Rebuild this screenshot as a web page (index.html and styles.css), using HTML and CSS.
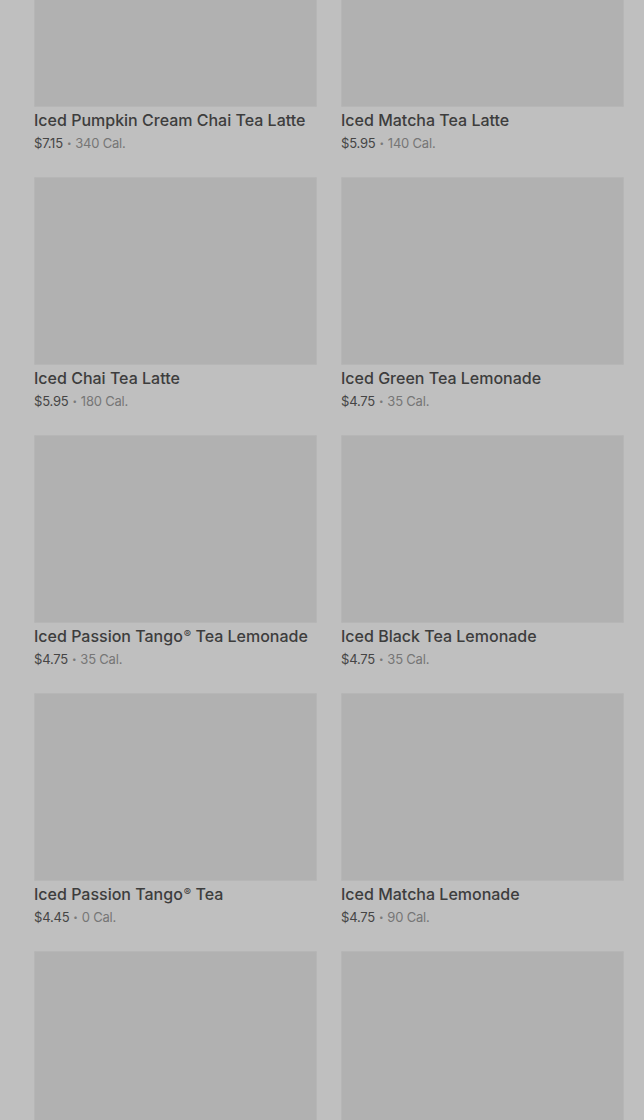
FILE: index.html
```html
<!DOCTYPE html>
<html lang="en">
<head>
<meta charset="utf-8">
<title>Iced Teas</title>
<link rel="stylesheet" href="styles.css">
</head>
<body>
<main class="grid">
  <article class="card"><div class="thumb"></div><h3 class="name">Iced Pumpkin Cream Chai Tea Latte</h3><p class="meta"><span class="price">$7.15</span><span class="dot">•</span><span class="cal">340 Cal.</span></p></article>
  <article class="card"><div class="thumb"></div><h3 class="name">Iced Matcha Tea Latte</h3><p class="meta"><span class="price">$5.95</span><span class="dot">•</span><span class="cal">140 Cal.</span></p></article>
  <article class="card"><div class="thumb"></div><h3 class="name">Iced Chai Tea Latte</h3><p class="meta"><span class="price">$5.95</span><span class="dot">•</span><span class="cal">180 Cal.</span></p></article>
  <article class="card"><div class="thumb"></div><h3 class="name">Iced Green Tea Lemonade</h3><p class="meta"><span class="price">$4.75</span><span class="dot">•</span><span class="cal">35 Cal.</span></p></article>
  <article class="card"><div class="thumb"></div><h3 class="name">Iced Passion Tango<span class="reg">®</span> Tea Lemonade</h3><p class="meta"><span class="price">$4.75</span><span class="dot">•</span><span class="cal">35 Cal.</span></p></article>
  <article class="card"><div class="thumb"></div><h3 class="name">Iced Black Tea Lemonade</h3><p class="meta"><span class="price">$4.75</span><span class="dot">•</span><span class="cal">35 Cal.</span></p></article>
  <article class="card"><div class="thumb"></div><h3 class="name">Iced Passion Tango<span class="reg">®</span> Tea</h3><p class="meta"><span class="price">$4.45</span><span class="dot">•</span><span class="cal">0 Cal.</span></p></article>
  <article class="card"><div class="thumb"></div><h3 class="name">Iced Matcha Lemonade</h3><p class="meta"><span class="price">$4.75</span><span class="dot">•</span><span class="cal">90 Cal.</span></p></article>
  <article class="card"><div class="thumb"></div></article>
  <article class="card"><div class="thumb"></div></article>
</main>
</body>
</html>
```
FILE: styles.css
```css
html, body {
  margin: 0;
  padding: 0;
  background: #bfbfbf;
  overflow: hidden;
}
body {
  height: 1120px;
  font-family: "Inter", "Roboto", "Liberation Sans", sans-serif;
  color: #3b3b3b;
}
.grid {
  display: grid;
  grid-template-columns: 283px 283px;
  column-gap: 24px;
  row-gap: 0;
  padding: 0 20px 0 34px;
  margin-top: -81px;
}
.card {
  height: 258px;
  display: flex;
  flex-direction: column;
}
.thumb {
  height: 188px;
  flex: none;
  background: #b1b1b1;
  border-radius: 2px;
  box-shadow: inset 0 0 0 1px #b6b6b6;
}
.name {
  margin: 3px 0 0;
  font-size: 16px;
  line-height: 20px;
  font-weight: 500;
  letter-spacing: 0;
  color: #3d3d3d;
  white-space: nowrap;
}
.reg {
  font-size: 11px;
  vertical-align: 4px;
  line-height: 0;
  margin-left: 1px;
}
.meta {
  margin: 3px 0 0;
  font-size: 13px;
  line-height: 20px;
  letter-spacing: -0.2px;
}
.price {
  color: #454545;
}
.dot {
  color: #7a7a7a;
  font-size: 8px;
  vertical-align: 2px;
  margin: 0 4px;
}
.cal {
  color: #767676;
}
```
